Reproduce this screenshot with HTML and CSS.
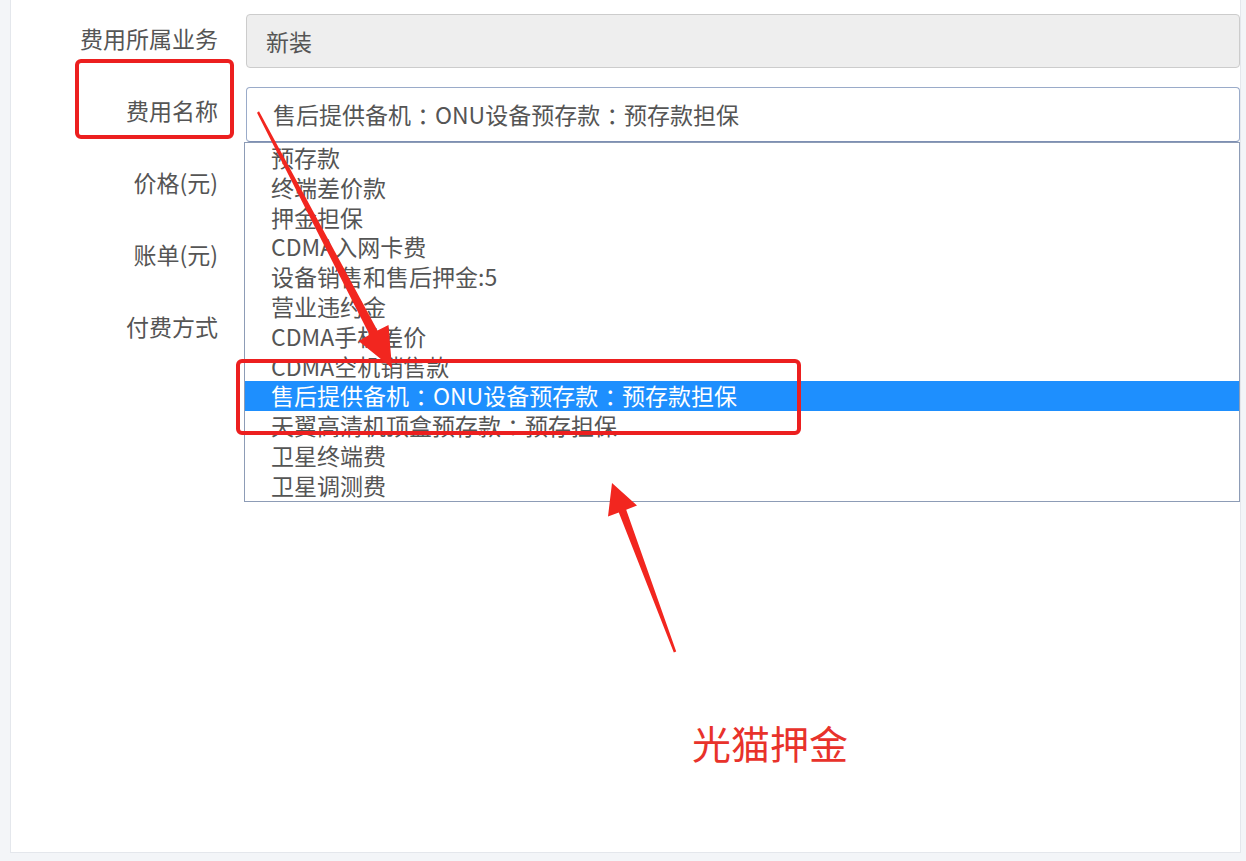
FILE: index.html
```html
<!DOCTYPE html>
<html lang="zh-CN">
<head>
  <meta charset="UTF-8">
  <title>费用信息</title>
  <link rel="stylesheet" href="styles.css">
</head>
<body>

<div class="screen">
  <div class="panel">
    <form class="fee-form">
      <!-- 业务 -->
      <div class="row">
        <label class="row-label">费用所属业务</label>
        <div class="field">
          <div class="input readonly">新装</div>
        </div>
      </div>

      <!-- 费用名称 + 展开的下拉 -->
      <div class="row">
        <label class="row-label">费用名称</label>
        <div class="field">
          <div class="select">售后提供备机<span class="colon">：</span>ONU设备预存款<span class="colon">：</span>预存款担保</div>
          <ul class="options">
            <li>预存款</li>
            <li>终端差价款</li>
            <li>押金担保</li>
            <li>CDMA入网卡费</li>
            <li>设备销售和售后押金:5</li>
            <li>营业违约金</li>
            <li>CDMA手机差价</li>
            <li>CDMA空机销售款</li>
            <li class="selected">售后提供备机<span class="colon">：</span>ONU设备预存款<span class="colon">：</span>预存款担保</li>
            <li>天翼高清机顶盒预存款<span class="colon">：</span>预存担保</li>
            <li>卫星终端费</li>
            <li>卫星调测费</li>
          </ul>
        </div>
      </div>

      <div class="row">
        <label class="row-label">价格(元)</label>
        <div class="field"><div class="input"></div></div>
      </div>
      <div class="row">
        <label class="row-label">账单(元)</label>
        <div class="field"><div class="input"></div></div>
      </div>
      <div class="row">
        <label class="row-label">付费方式</label>
        <div class="field"><div class="input"></div></div>
      </div>
    </form>
  </div>

  <!-- 标注 -->
  <div class="mark mark-label"></div>
  <div class="mark mark-option"></div>
  <svg class="arrows" width="1246" height="861" viewBox="0 0 1246 861">
    <polygon fill="#f2261f" points="257,112.8 369.5,334.8 358.5,341 392,368 388.5,325 377.5,330.5 259,111.2"/>
    <polygon fill="#f2261f" points="676.2,651.6 626.2,509.7 637,505.5 612,483 608,516.5 618.8,512.5 673.8,652.4"/>
  </svg>
  <div class="note">光猫押金</div>
</div>

</body>
</html>
```

FILE: styles.css
```css
body {
  margin: 0;
  padding: 0;
  background-color: #f3f5f8;
  font-family: "Noto Sans CJK SC", "Noto Sans", sans-serif;
  color: #555;
}
.screen {
  position: relative;
  width: 1246px;
  height: 861px;
  overflow: hidden;
}
.panel {
  margin-left: 10px;
  width: 1229px;
  height: 852px;
  background-color: #fff;
  border-left: 1px solid #e4e7ec;
  border-right: 1px solid #e4e7ec;
  border-bottom: 1px solid #e4e7ec;
}
.fee-form {
  padding-top: 15px;
}
.row {
  display: grid;
  grid-template-columns: 207px 1fr;
  column-gap: 28px;
  height: 54px;
  margin-bottom: 18px;
}
.row-label {
  text-align: right;
  font-size: 23px;
  line-height: 30px;
  padding-top: 8px;
  color: #555;
}
.field {
  position: relative;
}
.input {
  box-sizing: border-box;
  height: 54px;
  border: 1px solid #ccc;
  border-radius: 4px;
  padding-left: 19px;
  font-size: 23px;
  line-height: 52px;
  background-color: #fff;
}
.input.readonly {
  background-color: #eee;
  margin-top: -1px;
}
.select {
  box-sizing: border-box;
  height: 55px;
  border: 1px solid #9aabc9;
  border-bottom-color: #7d8fb3;
  border-radius: 4px;
  padding-left: 26px;
  font-size: 23px;
  line-height: 53px;
  background-color: #fff;
  white-space: nowrap;
}
/* 全角冒号居中显示，和 YaHei 一样 */
.colon {
  font-feature-settings: "halt";
  padding: 0 0.27em;
}
.options {
  position: absolute;
  top: 55px;
  left: -2px;
  right: 0;
  margin: 0;
  padding: 0;
  list-style: none;
  background-color: #fff;
  border: 1px solid #8d9cb6;
  z-index: 2;
}
.options li {
  height: 29.8px;
  line-height: 29.8px;
  padding-left: 26px;
  font-size: 23px;
  color: #555;
  white-space: nowrap;
}
.options li.selected {
  background-color: #1e8ffe;
  color: #fff;
}
.mark {
  position: absolute;
  border: 4px solid #ec1f1f;
  border-radius: 6px;
  z-index: 3;
}
.mark-label {
  left: 75px;
  top: 59px;
  width: 151px;
  height: 72px;
}
.mark-option {
  left: 236px;
  top: 359px;
  width: 557px;
  height: 68px;
}
.arrows {
  position: absolute;
  left: 0;
  top: 0;
  z-index: 4;
}
.note {
  position: absolute;
  left: 692px;
  top: 715px;
  font-size: 39px;
  line-height: 54px;
  color: #e8322b;
  z-index: 4;
}
```
